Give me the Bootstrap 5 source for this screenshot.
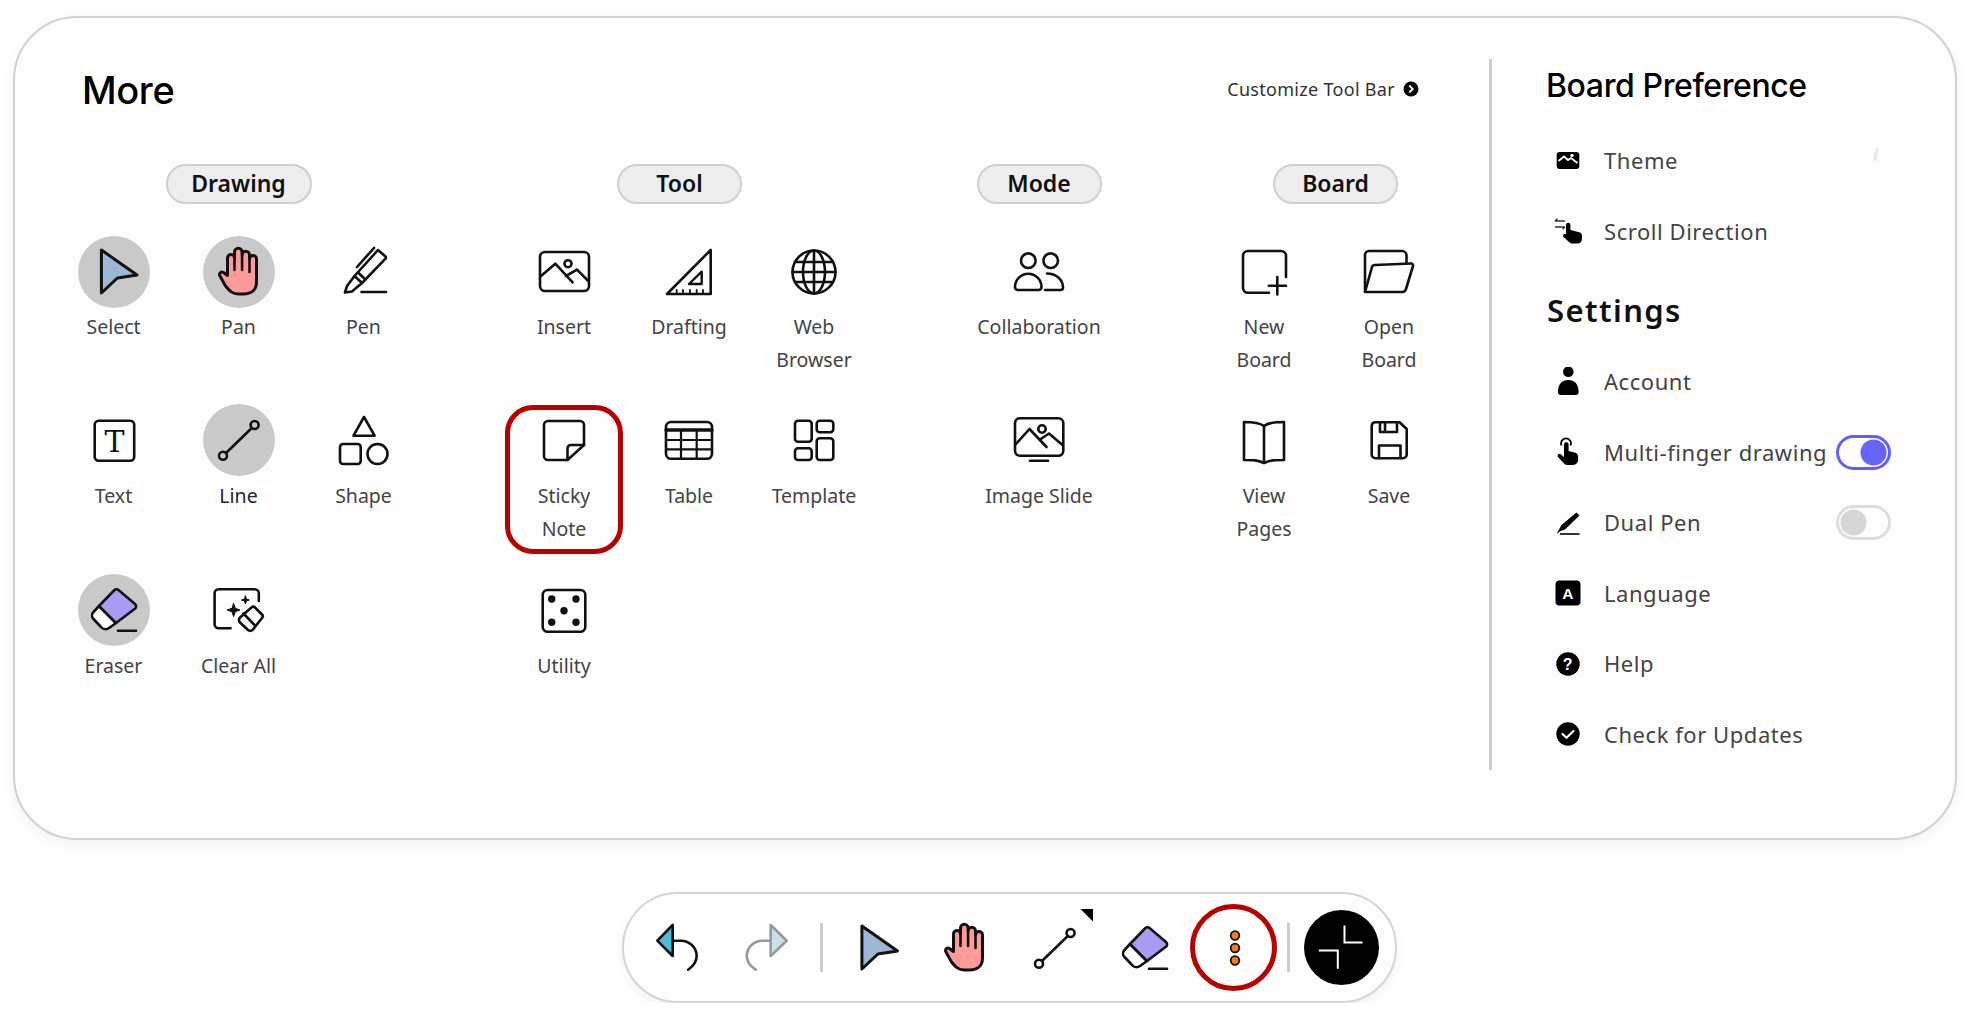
<!DOCTYPE html>
<html lang="en">
<head>
  <meta charset="UTF-8" />
  <meta name="viewport" content="width=device-width, initial-scale=1.0"/>
  <title>More - Board Tool Bar</title>
  <link href="https://cdn.jsdelivr.net/npm/bootstrap@5.3.3/dist/css/bootstrap.min.css" rel="stylesheet">
  <style>
    body {
      background-color: #fff;
      font-family: "Noto Sans", sans-serif;
      overflow: hidden;
    }

    .ic {
      fill: none;
      stroke: #111;
      stroke-width: 2.6;
      stroke-linecap: round;
      stroke-linejoin: round;
      display: block;
      width: 72px;
      height: 72px;
    }

    /* Big panel */
    .more-card {
      width: 1944px;
      height: 824px;
      margin: 16px 0 0 13px;
      background-color: #fdfdfd;
      border: 2px solid #d2d2d2;
      border-radius: 64px;
      box-shadow: 0 4px 14px rgba(0, 0, 0, 0.06);
    }

    .tools-side {
      width: 1474px;
      padding: 49px 70px 0 36px;
    }

    .more-head {
      height: 46px;
      margin-bottom: 51px;
      padding-left: 31px;
    }

    .more-title {
      font-family: "Inter", sans-serif;
      font-size: 38px;
      font-weight: 500;
      line-height: 48px;
      color: #000;
      margin: 0;
      letter-spacing: -0.4px;
    }

    .customize {
      font-size: 18px;
      letter-spacing: 0.3px;
      color: #333;
      margin-top: -2px;
    }

    .group-tool { margin-left: 75.5px; }
    .group-mode,
    .group-board { margin-left: 100px; }

    .chip {
      height: 40px;
      width: 125px;
      background-color: #eee;
      border: 2px solid #cfcfcf;
      border-radius: 20px;
      font-size: 23px;
      font-weight: 600;
      line-height: 35px;
      text-align: center;
      color: #111;
      margin-bottom: 32px;
    }

    .chip-wide { width: 146px; }
    .chip-tool { margin-right: 19px; }
    .chip-board { margin-left: 18px; }

    .tool-grid {
      display: grid;
      grid-template-columns: repeat(3, 125px);
      grid-template-rows: 168px 170px 169px;
    }

    .tool-grid.one { grid-template-columns: 125px; }
    .tool-grid.two { grid-template-columns: repeat(2, 125px); }

    .tool-cell {
      position: relative;
      display: flex;
      flex-direction: column;
      align-items: center;
      font-size: 19.5px;
      line-height: 33px;
      color: #444;
      text-align: center;
      white-space: nowrap;
    }

    .tool-cell .lbl { margin-top: 3px; }
    .tool-cell.row-one .lbl { margin-top: 2px; }

    .tool-cell .on {
      background-color: #c9c9c9;
      border-radius: 50%;
    }

    .callout {
      position: absolute;
      left: 3.5px;
      top: 1px;
      width: 118px;
      height: 149px;
      border: 5px solid #b80000;
      border-radius: 28px;
    }

    /* Vertical line */
    .side-rule {
      width: 3px;
      height: 711px;
      margin-top: 41px;
      background-color: #ccc;
    }

    /* Right column */
    .prefs-side {
      width: 345px;
      margin-left: 54px;
      padding-top: 45px;
    }

    .prefs-title {
      font-family: "Inter", sans-serif;
      font-size: 32px;
      font-weight: 500;
      line-height: 46px;
      letter-spacing: -0.4px;
      color: #000;
      margin: 0 0 16.5px;
    }

    .prefs-sub {
      font-size: 31px;
      font-weight: 600;
      line-height: 46px;
      letter-spacing: 1.4px;
      color: #111;
      margin: 20px 0 14px;
      padding-left: 1px;
    }

    .pref-item {
      display: flex;
      align-items: center;
      height: 70.5px;
      padding: 0 0 0 7px;
      background: transparent;
      border: 0;
      font-size: 22px;
      letter-spacing: 0.55px;
      color: #444;
      white-space: nowrap;
    }

    .pref-ic {
      width: 30px;
      height: 30px;
      flex: none;
      display: block;
      margin-right: 21px;
    }

    .pref-ic text {
      font-family: "Liberation Sans", sans-serif;
      font-weight: 700;
      text-anchor: middle;
      fill: #fff;
    }

    .theme-mark {
      width: 4px;
      height: 13px;
      margin: -12px 13px 0 auto;
      background-color: #ececec;
      border-radius: 2px;
      transform: skewX(-10deg);
    }

    /* Toggles */
    .form-switch {
      min-height: 0;
      padding-left: 0;
      margin: 0 0 0 auto;
      line-height: 0;
    }

    .form-switch .form-check-input {
      width: 55px;
      height: 35px;
      margin: 0;
      float: none;
      background-color: transparent;
      border: 3px solid #ddd;
      box-shadow: none;
      --bs-form-switch-bg: url("data:image/svg+xml,%3csvg xmlns='http://www.w3.org/2000/svg' viewBox='-4 -4 8 8'%3e%3ccircle r='3.6' fill='%23d6d6d6'/%3e%3c/svg%3e");
    }

    .form-switch .form-check-input:checked {
      border-color: #5f5fff;
      --bs-form-switch-bg: url("data:image/svg+xml,%3csvg xmlns='http://www.w3.org/2000/svg' viewBox='-4 -4 8 8'%3e%3ccircle r='3.6' fill='%236666ff'/%3e%3c/svg%3e");
    }

    /* Bottom tool bar */
    .dock {
      width: 775px;
      height: 111px;
      margin: 52px 0 0 622px;
      padding-left: 8px;
      background-color: #fdfdfd;
      border: 2px solid #d5d5d5;
      border-radius: 56px;
      box-shadow: 0 4px 12px rgba(0, 0, 0, 0.06);
    }

    .dock-btn {
      position: relative;
      width: 90px;
      height: 72px;
      flex: none;
      display: flex;
      justify-content: center;
      padding: 0;
      border: 0;
      background: none;
    }

    .dock-rule {
      width: 3px;
      height: 49px;
      flex: none;
      background-color: #ccc;
      margin: 0 11px 0 8px;
    }

    .dock-rule.end { margin: 0 0 0 7px; }

    .dock-close {
      width: 75px;
      height: 75px;
      flex: none;
      margin-left: 14px;
      display: block;
    }

    .more-ring {
      position: absolute;
      left: 0;
      top: -7.5px;
      width: 87px;
      height: 87px;
      border: 5px solid #b80000;
      border-radius: 50%;
    }

    .corner-mark {
      position: absolute;
      left: 70px;
      top: -3px;
      width: 13px;
      height: 13px;
      background-color: #000;
      clip-path: polygon(0 0, 100% 0, 100% 100%);
    }

    .shift-l { margin-left: -4px; }
  </style>
</head>
<body>

<!-- shared icons -->
<svg class="d-none">
  <symbol id="i-select" viewBox="0 0 72 72">
    <path d="M23.4 14 59 39 39.4 42 23.4 57Z" fill="#9db8d6" stroke-width="3"/>
  </symbol>
  <symbol id="i-hand" viewBox="0 0 72 72">
    <g transform="translate(15.5 12)">
      <path d="M1.5 28c-1.500-2.500 1-5 3.500-3.500l4 3V10a3.500 3.500 0 0 1 7 0V4a3.800 3.800 0 0 1 7.600 0V7a3.700 3.700 0 0 1 7.400 0v4a3.500 3.500 0 0 1 7 0v23c0 8-5 12-13 12h-5c-6 0-9-3-13-8z" fill="#ff9a9a" stroke-width="3"/>
      <path d="M16 10v12M23.600 7v15M31 11v13" stroke-width="2.600"/>
    </g>
  </symbol>
  <symbol id="i-line" viewBox="0 0 72 72">
    <circle cx="20" cy="51.700" r="4"/>
    <circle cx="51.600" cy="21" r="4"/>
    <path d="M23 49 48.800 24"/>
  </symbol>
  <symbol id="i-eraser" viewBox="0 0 72 72">
    <path d="M21 32 15.500 38a5 5 0 0 0 0 7L23 53a6 6 0 0 0 8 1L38 49Z" fill="#fff"/>
    <path d="M36 16.500a3 3 0 0 1 4.500-.5L57 30a3 3 0 0 1 .2 4.500L38 49 21 32Z" fill="#a99cf5"/>
    <path d="M40 56.700H58"/>
  </symbol>
  <symbol id="i-peaks" viewBox="0 0 72 72">
    <rect x="12" y="16" width="49" height="39" rx="5"/>
    <path d="M12.700 40.300 27.300 27.700 44.600 46.300M38 40 49 33.700 60.300 45"/>
    <circle cx="40" cy="27.700" r="3.500"/>
  </symbol>
</svg>

<!-- Main panel -->
<div class="more-card d-flex">
  <div class="tools-side">
    <div class="more-head d-flex justify-content-between align-items-center">
      <h1 class="more-title">More</h1>
      <div class="customize d-flex align-items-center gap-2">
        <span>Customize Tool Bar</span>
        <svg width="16" height="16" viewBox="0 0 16 16"><circle cx="8" cy="8" r="7.500" fill="#000"/><path d="M6.300 4.500 9.800 8 6.300 11.500" fill="none" stroke="#fff" stroke-width="1.800"/></svg>
      </div>
    </div>

    <div class="d-flex">
      <!-- Drawing -->
      <section>
        <div class="d-flex justify-content-center"><div class="chip chip-wide">Drawing</div></div>
        <div class="tool-grid">
          <div class="tool-cell row-one"><svg class="ic on"><use href="#i-select"/></svg><span class="lbl">Select</span></div>
          <div class="tool-cell row-one"><svg class="ic on"><use href="#i-hand"/></svg><span class="lbl">Pan</span></div>
          <div class="tool-cell row-one">
            <svg class="ic" viewBox="0 0 72 72">
              <path d="M50 14l7.500 6.500a1.500 1.500 0 0 1 0 2.200L34 47l-7.500-7Z"/>
              <path d="M26.500 40 19 50l-2 6.500 7-1L34 47M30 36.500l7.500 7M46 12 29 31"/>
              <path d="M33.500 56H58"/>
            </svg>
            <span class="lbl">Pen</span>
          </div>
          <div class="tool-cell">
            <svg class="ic" viewBox="0 0 72 72">
              <rect x="16.700" y="16.700" width="39.500" height="40" rx="4"/>
              <text x="36.500" y="48" font-family="DejaVu Serif, serif" font-size="30" text-anchor="middle" fill="#111" stroke="none">T</text>
            </svg>
            <span class="lbl">Text</span>
          </div>
          <div class="tool-cell"><svg class="ic on"><use href="#i-line"/></svg><span class="lbl text-dark">Line</span></div>
          <div class="tool-cell">
            <svg class="ic" viewBox="0 0 72 72">
              <path d="M36 13 46.600 31.700H25.500Z"/>
              <rect x="12" y="40" width="20.700" height="20" rx="3"/>
              <circle cx="49.500" cy="50" r="10"/>
            </svg>
            <span class="lbl">Shape</span>
          </div>
          <div class="tool-cell"><svg class="ic on"><use href="#i-eraser"/></svg><span class="lbl">Eraser</span></div>
          <div class="tool-cell">
            <svg class="ic" viewBox="0 0 72 72">
              <path d="M27.600 54.300H15.600a4 4 0 0 1-4-4V19.300a4 4 0 0 1 4-4H51.800a4 4 0 0 1 4 4V27"/>
              <path d="M30.600 29.500 32.300 34.300 37 36 32.300 37.700 30.600 42.500 28.900 37.700 24 36 28.900 34.300ZM42.400 22 43.400 25 46.400 26 43.400 27 42.400 30 41.400 27 38.400 26 41.400 25Z" fill="#111" stroke-width="1"/>
              <path d="M48.500 33.500a2.500 2.500 0 0 1 3.500 0l7 7a2.500 2.500 0 0 1 0 3.500L50 55.500a3.500 3.500 0 0 1-5 .5l-8-7.500a3.500 3.500 0 0 1 0-5ZM40.500 39.500l10.500 11"/>
            </svg>
            <span class="lbl">Clear All</span>
          </div>
        </div>
      </section>

      <!-- Tool -->
      <section class="group-tool">
        <div class="d-flex justify-content-center"><div class="chip chip-tool">Tool</div></div>
        <div class="tool-grid">
          <div class="tool-cell row-one"><svg class="ic"><use href="#i-peaks"/></svg><span class="lbl">Insert</span></div>
          <div class="tool-cell row-one">
            <svg class="ic" viewBox="0 0 72 72">
              <path d="M57.700 14V58H14Z"/>
              <path d="M48.700 35.700V48H36Z" stroke-width="2.400"/>
              <path d="M23.700 54V58M30 54V58M37 54V58M43.700 54V58M50 54V58" stroke-width="1.800"/>
            </svg>
            <span class="lbl">Drafting</span>
          </div>
          <div class="tool-cell row-one">
            <svg class="ic" viewBox="0 0 72 72">
              <circle cx="36" cy="36" r="21.500"/>
              <ellipse cx="36" cy="36" rx="11" ry="21.500"/>
              <path d="M36 14.500V57.500M14.500 36H57.500M17 26H55M17 46H55"/>
            </svg>
            <span class="lbl">Web<br>Browser</span>
          </div>
          <div class="tool-cell">
            <svg class="ic" viewBox="0 0 72 72">
              <path d="M20 17H52a4 4 0 0 1 4 4V41L39.500 56H20a4 4 0 0 1-4-4V21a4 4 0 0 1 4-4Z"/>
              <path d="M56 41H43a3.500 3.500 0 0 0-3.500 3.500V56"/>
            </svg>
            <span class="lbl">Sticky<br>Note</span>
            <span class="callout"></span>
          </div>
          <div class="tool-cell">
            <svg class="ic" viewBox="0 0 72 72">
              <rect x="13" y="18" width="46" height="36.700" rx="5"/>
              <path d="M13 26H59" stroke-width="3.400"/>
              <path d="M13 36H59M13 45.300H59M28 26V54.700M43.700 26V54.700" stroke-width="2.200"/>
            </svg>
            <span class="lbl">Table</span>
          </div>
          <div class="tool-cell">
            <svg class="ic" viewBox="0 0 72 72">
              <rect x="17" y="16.700" width="16.700" height="21" rx="3"/>
              <rect x="17" y="44.300" width="16.700" height="11.700" rx="3"/>
              <rect x="38.700" y="16.700" width="16.600" height="11.600" rx="3"/>
              <rect x="38.700" y="34.300" width="16.600" height="21.700" rx="3"/>
            </svg>
            <span class="lbl">Template</span>
          </div>
          <div class="tool-cell">
            <svg class="ic" viewBox="0 0 72 72">
              <rect x="14.700" y="16" width="42.600" height="41.700" rx="5"/>
              <g fill="#111" stroke="none">
                <circle cx="23.700" cy="25" r="3.700"/><circle cx="48" cy="25" r="3.700"/>
                <circle cx="36" cy="36.700" r="3.700"/>
                <circle cx="23.700" cy="48.300" r="3.700"/><circle cx="48" cy="48.300" r="3.700"/>
              </g>
            </svg>
            <span class="lbl">Utility</span>
          </div>
        </div>
      </section>

      <!-- Mode -->
      <section class="group-mode">
        <div class="chip">Mode</div>
        <div class="tool-grid one">
          <div class="tool-cell row-one">
            <svg class="ic" viewBox="0 0 72 72">
              <circle cx="25.300" cy="24.700" r="7.300"/>
              <circle cx="47.700" cy="24.700" r="7.300"/>
              <path d="M14.500 54H36a3 3 0 0 0 2.500-3 13 13 0 0 0-26.500 0 3 3 0 0 0 2.500 3Z"/>
              <path d="M44 37.500c9 0 16 6 16 14a2.500 2.500 0 0 1-2.500 2.500H42"/>
            </svg>
            <span class="lbl">Collaboration</span>
          </div>
          <div class="tool-cell">
            <svg class="ic" viewBox="0 0 72 72">
              <rect x="12" y="14.300" width="48.300" height="37.400" rx="5"/>
              <path d="M27 56.700H45"/>
              <path d="M13 40 26.500 25 43.500 43M37 35.500 46 29.500 59.500 41"/>
              <circle cx="39" cy="25" r="3.700"/>
            </svg>
            <span class="lbl">Image Slide</span>
          </div>
        </div>
      </section>

      <!-- Board -->
      <section class="group-board">
        <div class="d-flex justify-content-center"><div class="chip chip-board">Board</div></div>
        <div class="tool-grid two">
          <div class="tool-cell row-one">
            <svg class="ic" viewBox="0 0 72 72">
              <path d="M41 56.700H20a5 5 0 0 1-5-5V20a5 5 0 0 1 5-5H53a5 5 0 0 1 5 5V41"/>
              <path d="M49.300 41V58.500M40.800 49.700H58"/>
            </svg>
            <span class="lbl">New<br>Board</span>
          </div>
          <div class="tool-cell row-one">
            <svg class="ic" viewBox="0 0 72 72">
              <path d="M12 55V19a4 4 0 0 1 4-4H49a4.500 4.500 0 0 1 4.500 4.500V27"/>
              <path d="M12 56 19 31a3 3 0 0 1 3-2L58 27.500a2 2 0 0 1 2 2.500L53 53a4 4 0 0 1-4 3Z"/>
            </svg>
            <span class="lbl">Open<br>Board</span>
          </div>
          <div class="tool-cell">
            <svg class="ic" viewBox="0 0 72 72">
              <path d="M36 22c-4-3-10-4-20-4V56c9 0 14 0 20 3 6-3 11-3 20-3V18c-10 0-16 1-20 4Z"/>
              <path d="M36 22V58"/>
            </svg>
            <span class="lbl">View<br>Pages</span>
          </div>
          <div class="tool-cell">
            <svg class="ic" viewBox="0 0 72 72">
              <path d="M22 18.300H46.500L53.700 25V50.500a3.800 3.800 0 0 1-3.800 3.800H22.500a3.800 3.800 0 0 1-3.800-3.800V22a3.800 3.800 0 0 1 3.300-3.700Z"/>
              <path d="M27 18.300V28H44V18.300M32 19V27M26 54V41.500H47.500V54"/>
            </svg>
            <span class="lbl">Save</span>
          </div>
        </div>
      </section>
    </div>
  </div>

  <div class="side-rule"></div>

  <!-- Preferences -->
  <div class="prefs-side">
    <h2 class="prefs-title">Board Preference</h2>
    <ul class="list-group list-group-flush">
      <li class="pref-item">
        <svg class="pref-ic" viewBox="0 0 30 30">
          <rect x="3.700" y="6" width="22.600" height="17" rx="3" fill="#000"/>
          <path d="M5.500 15 11 10.500 15 14 18 12 24.500 17" fill="none" stroke="#fff" stroke-width="1.800"/>
          <circle cx="19" cy="9.500" r="1.700" fill="#fff"/>
        </svg>
        <span>Theme</span>
        <span class="theme-mark"></span>
      </li>
      <li class="pref-item">
        <svg class="pref-ic" viewBox="0 0 30 30">
          <path d="M2 5H12M2 5 4.500 2.700M12 11H2M12 11 9.500 13.300" fill="none" stroke="#333" stroke-width="1.400"/>
          <path d="M13 9a2.200 2.200 0 0 1 4.400 0v5l8 2a4 4 0 0 1 3.600 4v3a4.500 4.500 0 0 1-4.500 4.500H19a4 4 0 0 1-3-1.500L10.500 21a2 2 0 0 1 2.500-3Z" fill="#000"/>
        </svg>
        <span>Scroll Direction</span>
      </li>
    </ul>

    <h2 class="prefs-sub">Settings</h2>
    <ul class="list-group list-group-flush">
      <li class="pref-item">
        <svg class="pref-ic" viewBox="0 0 30 30">
          <circle cx="15.300" cy="4.800" r="5.300" fill="#000"/>
          <path d="M5 25c0-8 4-12 10.300-12s10.300 4 10.300 12a3 3 0 0 1-3 3H8a3 3 0 0 1-3-3Z" fill="#000"/>
        </svg>
        <span>Account</span>
      </li>
      <li class="pref-item">
        <svg class="pref-ic" viewBox="0 0 30 30">
          <path d="M8.500 8.500a5 5 0 1 1 9 0" fill="none" stroke="#000" stroke-width="1.800"/>
          <path d="M11 7.500a2.300 2.300 0 0 1 4.600 0V14l6 1.500a4.500 4.500 0 0 1 3.500 4.300V23a5 5 0 0 1-5 5H14a4 4 0 0 1-3-1.500L5 20a2 2 0 0 1 3-2.600l3 2.500Z" fill="#000"/>
        </svg>
        <span>Multi-finger drawing</span>
        <div class="form-check form-switch"><input class="form-check-input" type="checkbox" role="switch" checked aria-label="Multi-finger drawing"></div>
      </li>
      <li class="pref-item">
        <svg class="pref-ic" viewBox="0 0 30 30">
          <path d="M23.500 4.500 26.500 7.500 12 21.500 7.500 23 3.500 26 6 21.500 8.500 17Z" fill="#000"/>
          <path d="M7 26H26.500" stroke="#000" stroke-width="1.600"/>
        </svg>
        <span>Dual Pen</span>
        <div class="form-check form-switch"><input class="form-check-input" type="checkbox" role="switch" aria-label="Dual Pen"></div>
      </li>
      <li class="pref-item">
        <svg class="pref-ic" viewBox="0 0 30 30">
          <rect x="2.500" y="2.500" width="25" height="25" rx="4" fill="#000"/>
          <text x="15" y="20.500" font-size="15.500">A</text>
        </svg>
        <span>Language</span>
      </li>
      <li class="pref-item">
        <svg class="pref-ic" viewBox="0 0 30 30">
          <circle cx="15" cy="15" r="11.700" fill="#000"/>
          <text x="15" y="20.800" font-size="16">?</text>
        </svg>
        <span>Help</span>
      </li>
      <li class="pref-item">
        <svg class="pref-ic" viewBox="0 0 30 30">
          <circle cx="15" cy="15" r="11.700" fill="#000"/>
          <path d="M9.500 15 13.500 18.800 20.500 12" fill="none" stroke="#fff" stroke-width="2.200" stroke-linecap="round" stroke-linejoin="round"/>
        </svg>
        <span>Check for Updates</span>
      </li>
    </ul>
  </div>
</div>

<!-- Bottom tool bar -->
<div class="dock d-flex align-items-center">
  <button class="dock-btn" aria-label="Undo">
    <svg class="ic" viewBox="0 0 72 72">
      <path d="M16.300 28.700 31.700 13V44Z" fill="#4dbcd6"/>
      <path d="M32 28.700H39a16 15.500 0 0 1 16.700 15c0 5-3 10-8.500 14"/>
    </svg>
  </button>
  <button class="dock-btn" aria-label="Redo">
    <svg class="ic" viewBox="0 0 72 72" style="stroke:#999">
      <path d="M55.700 28.700 39.700 13V44Z" fill="#c9e0e6"/>
      <path d="M39.700 28.700H32.500a16 15.500 0 0 0-16.800 15c0 5 3 10 9 14"/>
    </svg>
  </button>
  <span class="dock-rule"></span>
  <button class="dock-btn" aria-label="Select"><svg class="ic" viewBox="4.500 0 72 72"><use href="#i-select" width="72" height="72"/></svg></button>
  <button class="dock-btn shift-l" aria-label="Pan"><svg class="ic"><use href="#i-hand"/></svg></button>
  <button class="dock-btn" aria-label="Line"><svg class="ic"><use href="#i-line"/></svg><span class="corner-mark"></span></button>
  <button class="dock-btn" aria-label="Eraser"><svg class="ic"><use href="#i-eraser"/></svg></button>
  <button class="dock-btn" aria-label="More">
    <svg class="ic" viewBox="0 0 72 72" style="stroke-width:1.800">
      <circle cx="36" cy="23.500" r="4.300" fill="#f57c14"/>
      <circle cx="36" cy="36" r="4.300" fill="#f57c14"/>
      <circle cx="36" cy="48.500" r="4.300" fill="#f57c14"/>
    </svg>
    <span class="more-ring"></span>
  </button>
  <span class="dock-rule end"></span>
  <svg class="dock-close" viewBox="0 0 75 75">
    <circle cx="37.500" cy="37.500" r="37.500" fill="#000"/>
    <path d="M40.500 15.500V32.500H58.500M14.800 40.500H33.800V58.800" fill="none" stroke="#fff" stroke-width="2"/>
  </svg>
</div>

<script src="https://cdn.jsdelivr.net/npm/bootstrap@5.3.3/dist/js/bootstrap.bundle.min.js"></script>
</body>
</html>
